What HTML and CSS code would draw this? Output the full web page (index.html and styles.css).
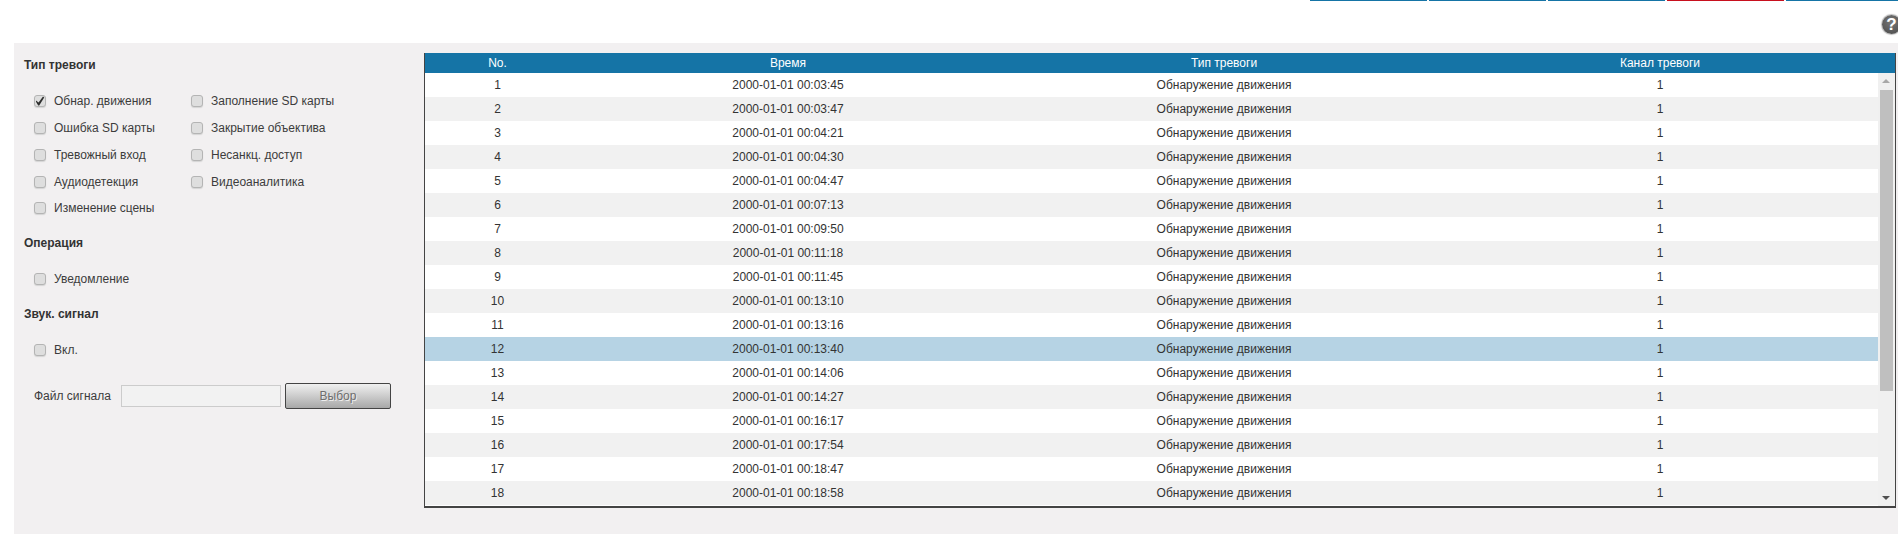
FILE: index.html
```html
<!DOCTYPE html>
<html lang="ru">
<head>
<meta charset="utf-8">
<title>Тревога</title>
<link rel="stylesheet" href="styles.css">
</head>
<body>
<header class="top">
  <nav class="tabs">
    <span class="tab"></span><span class="tab"></span><span class="tab"></span><span class="tab tab-red"></span><span class="tab tab-last"></span>
  </nav>
  <div class="help-row">
    <span class="help">?</span>
  </div>
</header>
<main class="panel">
  <aside class="side">
    <h3 class="head">Тип тревоги</h3>
    <div class="checks">
      <div class="check-col col-a">
        <label class="check"><span class="box"><svg class="tick" viewBox="0 0 10 10"><path d="M1 4.6 L3.6 6.6 L8 .6 L9.2 1.4 L4.2 9.6 L3.2 9.6 L1 5.8 Z"/></svg></span>Обнар. движения</label>
        <label class="check"><span class="box"></span>Ошибка SD карты</label>
        <label class="check"><span class="box"></span>Тревожный вход</label>
        <label class="check"><span class="box"></span>Аудиодетекция</label>
        <label class="check check-short"><span class="box"></span>Изменение сцены</label>
      </div>
      <div class="check-col">
        <label class="check"><span class="box"></span>Заполнение SD карты</label>
        <label class="check"><span class="box"></span>Закрытие объектива</label>
        <label class="check"><span class="box"></span>Несанкц. доступ</label>
        <label class="check"><span class="box"></span>Видеоаналитика</label>
      </div>
    </div>
    <h3 class="head head-op">Операция</h3>
    <div class="checks single">
      <label class="check"><span class="box"></span>Уведомление</label>
    </div>
    <h3 class="head head-snd">Звук. сигнал</h3>
    <div class="checks single">
      <label class="check"><span class="box"></span>Вкл.</label>
    </div>
    <div class="file-row">
      <span class="file-label">Файл сигнала</span>
      <span class="file-input"></span>
      <span class="file-btn">Выбор</span>
    </div>
  </aside>
  <section class="table">
    <div class="thead">
      <div>No.</div><div>Время</div><div>Тип тревоги</div><div>Канал тревоги</div>
    </div>
    <div class="tbody">
      <div class="rows">
        <div class="row"><div>1</div><div>2000-01-01 00:03:45</div><div>Обнаружение движения</div><div>1</div></div>
        <div class="row"><div>2</div><div>2000-01-01 00:03:47</div><div>Обнаружение движения</div><div>1</div></div>
        <div class="row"><div>3</div><div>2000-01-01 00:04:21</div><div>Обнаружение движения</div><div>1</div></div>
        <div class="row"><div>4</div><div>2000-01-01 00:04:30</div><div>Обнаружение движения</div><div>1</div></div>
        <div class="row"><div>5</div><div>2000-01-01 00:04:47</div><div>Обнаружение движения</div><div>1</div></div>
        <div class="row"><div>6</div><div>2000-01-01 00:07:13</div><div>Обнаружение движения</div><div>1</div></div>
        <div class="row"><div>7</div><div>2000-01-01 00:09:50</div><div>Обнаружение движения</div><div>1</div></div>
        <div class="row"><div>8</div><div>2000-01-01 00:11:18</div><div>Обнаружение движения</div><div>1</div></div>
        <div class="row"><div>9</div><div>2000-01-01 00:11:45</div><div>Обнаружение движения</div><div>1</div></div>
        <div class="row"><div>10</div><div>2000-01-01 00:13:10</div><div>Обнаружение движения</div><div>1</div></div>
        <div class="row"><div>11</div><div>2000-01-01 00:13:16</div><div>Обнаружение движения</div><div>1</div></div>
        <div class="row selected"><div>12</div><div>2000-01-01 00:13:40</div><div>Обнаружение движения</div><div>1</div></div>
        <div class="row"><div>13</div><div>2000-01-01 00:14:06</div><div>Обнаружение движения</div><div>1</div></div>
        <div class="row"><div>14</div><div>2000-01-01 00:14:27</div><div>Обнаружение движения</div><div>1</div></div>
        <div class="row"><div>15</div><div>2000-01-01 00:16:17</div><div>Обнаружение движения</div><div>1</div></div>
        <div class="row"><div>16</div><div>2000-01-01 00:17:54</div><div>Обнаружение движения</div><div>1</div></div>
        <div class="row"><div>17</div><div>2000-01-01 00:18:47</div><div>Обнаружение движения</div><div>1</div></div>
        <div class="row"><div>18</div><div>2000-01-01 00:18:58</div><div>Обнаружение движения</div><div>1</div></div>
      </div>
      <div class="scroll">
        <span class="arrow arrow-up"></span>
        <span class="thumb"></span>
        <span class="arrow arrow-down"></span>
      </div>
    </div>
  </section>
</main>
</body>
</html>
```
FILE: styles.css
```css
* { box-sizing: border-box; }
html, body { margin: 0; height: 534px; overflow: hidden; background: #fff; }
body { font-family: "Liberation Sans", Arial, sans-serif; font-size: 12px; color: #333; }

.top { height: 43px; display: flex; flex-direction: column; overflow: hidden; }
.tabs { display: flex; justify-content: flex-end; gap: 2px; height: 2px; }
.tab { width: 117px; height: 1px; background: #1574a6; }
.tab-red { background: #c8101e; }
.tab-last { width: 112px; }
.help-row { display: flex; justify-content: flex-end; padding-top: 13px; margin-right: -3px; }
.help {
  width: 19px; height: 19px; border-radius: 50%;
  background: radial-gradient(circle at 50% 35%, #777, #4a4a4a);
  box-shadow: 0 0 1px 1px #bbb;
  color: #fff; font: bold 17px/19px "Liberation Sans", sans-serif; text-align: center;
}

.panel { height: 491px; margin-left: 14px; background: #f2f0f1; display: flex; padding-top: 10px; }
.side { width: 410px; flex: none; padding: 5px 0 0 10px; }
.head { margin: 0; font-size: 12px; font-weight: bold; line-height: 14px; color: #333; }
.checks { display: flex; padding: 15px 0 0 10px; }
.single { display: block; }
.col-a { width: 157px; }
.check-col { display: flex; flex-direction: column; }
.check { display: flex; align-items: center; height: 27px; white-space: nowrap; color: #3c3c3c; }
.check-short { height: 25px; }
.box {
  width: 12px; height: 12px; margin-right: 8px; flex: none;
  border: 1px solid #b4b4b4; border-radius: 3px; background: #dedede;
  box-shadow: 0 1px 1px #d4d4d4; display: block;
}
.tick { display: block; width: 10px; height: 10px; fill: #2e2e2e; }
.head-op { margin-top: 16px; }
.head-snd { margin-top: 15px; }
.file-row { display: flex; align-items: center; margin: 20px 0 0 10px; }
.file-label { width: 87px; color: #3c3c3c; }
.file-input { width: 160px; height: 22px; border: 1px solid #ccc; background: #f2f2f2; }
.file-btn {
  width: 106px; height: 26px; margin-left: 4px; border: 1px solid #444; border-radius: 2px;
  background: linear-gradient(#f0f0f0, #a8a8a8); color: #6e6e6e; text-align: center;
  line-height: 24px; text-shadow: 1px 1px 0 #eee;
}

.table {
  width: 1472px; height: 455px; flex: none;
  border-left: 1px solid #444; border-right: 1px solid #444; border-bottom: 2px solid #444;
  display: flex; flex-direction: column; background: #fff;
}
.thead, .row { display: grid; grid-template-columns: 145px 436px 436px 436px; text-align: center; }
.thead { height: 20px; line-height: 20px; background: #1574a6; color: #fff; flex: none; }
.tbody { flex: 1; display: flex; overflow: hidden; }
.rows { flex: 1; overflow: hidden; }
.row { height: 24px; line-height: 24px; background: #fff; }
.row:nth-child(even) { background: #f1f1f1; }
.row.selected { background: #b6d3e4; }
.scroll { width: 17px; flex: none; position: relative; background: #f0f0f0; }
.thumb { position: absolute; left: 2px; top: 17px; width: 13px; height: 301px; background: #bfbfbf; }
.arrow { position: absolute; left: 4px; width: 0; height: 0; border-left: 4px solid transparent; border-right: 4px solid transparent; }
.arrow-up { top: 6px; border-bottom: 4px solid #a8a8a8; }
.arrow-down { top: 423px; border-top: 4px solid #505050; }
```
